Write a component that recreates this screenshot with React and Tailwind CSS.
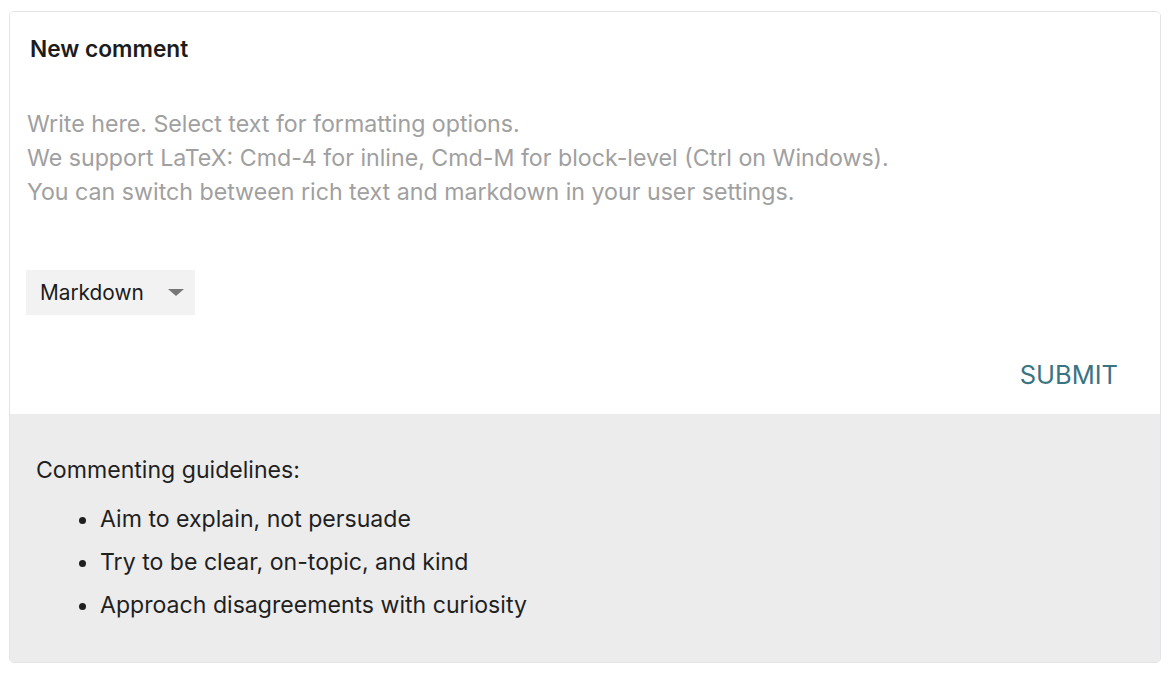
import { useState } from "react";

const guidelines = [
  "Aim to explain, not persuade",
  "Try to be clear, on-topic, and kind",
  "Approach disagreements with curiosity",
];

function App() {
  const [format, setFormat] = useState("Markdown");

  return (
    <div className="w-[1172px] h-[674px] bg-white pt-[11px] pl-[9px] pr-[11px] font-['Inter',sans-serif]">
      <div className="w-[1152px] border border-[#e3e3e8] rounded-[5px] overflow-hidden">
        {/* EDITOR */}
        <div className="bg-white">
          <h2 className="pl-5 pt-[22px] text-[22.7px] leading-[30px] font-semibold text-[#1c1c1c]">New comment</h2>
          <div className="pl-[17px] pt-[43px] text-[23.2px] leading-[34px] text-[#a0a0a0]">
            <p>Write here. Select text for formatting options.</p>
            <p>We support LaTeX: Cmd-4 for inline, Cmd-M for block-level (Ctrl on Windows).</p>
            <p>You can switch between rich text and markdown in your user settings.</p>
          </div>
          {/* format select */}
          <div className="pl-4 mt-[61px]">
            <button
              onClick={() => setFormat(format === "Markdown" ? "Rich text" : "Markdown")}
              className="w-[169px] h-[45px] bg-[#f2f2f2] flex items-center justify-between pl-[14px] pr-[10px] text-[20.8px] text-[#1c1c1c]"
            >
              <span>{format}</span>
              <svg width="18" height="9" viewBox="0 0 18 9">
                <path d="M1 1 L17 1 L9 8 Z" fill="#777777" />
              </svg>
            </button>
          </div>
          <div className="flex justify-end pr-[42px] pt-[40px] pb-[19px]">
            <button className="text-[25.5px] leading-[40px] text-[#3a7382]">SUBMIT</button>
          </div>
        </div>
        {/* GUIDELINES */}
        <div className="bg-[#ececec] pl-[26px] pt-[41px] pb-[35px] text-[23.1px] text-[#1f1f1f]">
          <p className="leading-[30px]">Commenting guidelines:</p>
          <ul className="list-disc pl-[64px] mt-[13px]">
            {guidelines.map((g) => (
              <li key={g} className="leading-[43px]">{g}</li>
            ))}
          </ul>
        </div>
      </div>
    </div>
  );
}

export default App;
